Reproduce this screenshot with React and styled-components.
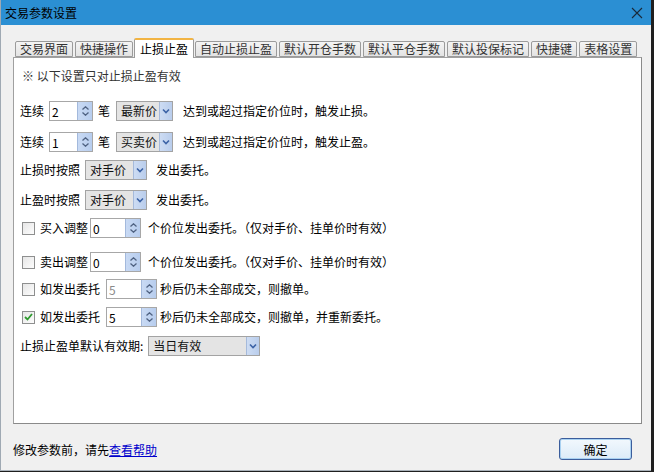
import React, {useState} from "react";
import styled, {createGlobalStyle} from "styled-components";

const GlobalStyle = createGlobalStyle`
  html, body {
    margin: 0;
    padding: 0;
    background: #1f1f1f;
  }
  body {
    font-family: "Noto Sans CJK SC", "Liberation Sans", sans-serif;
    font-size: 12px;
    color: #000;
  }
`

const Screen = styled.div`
  width: 654px;
  height: 472px;
  background: #1f1f1f;
  overflow: hidden;
`

const Window = styled.div`
  width: 650px;
  height: 470px;
  display: flex;
  flex-direction: column;
  background: #f0f0f0;
  border-left: 1px solid #9fa9b3;
  border-bottom: 1px solid #a8b0b8;
`

const TitleBar = styled.div`
  height: 25px;
  flex-shrink: 0;
  display: flex;
  align-items: center;
  justify-content: space-between;
  padding: 0 8px 0 4px;
  background: #2b8fd3;
  line-height: 25px;
`

const TitleText = styled.span`
  font-size: 12px;
  color: #000;
`

const CloseBtn = styled.span`
  display: flex;
  width: 12px;
  height: 12px;
  margin-top: 1px;
`

const Body = styled.div`
  padding: 12px 8px 0 12px;
  flex-shrink: 0;
`

const TabBar = styled.div`
  display: flex;
  align-items: flex-end;
  height: 20px;
  padding-left: 2px;
  position: relative;
  z-index: 1;
`

const Tab = styled.div`
  height: ${p => p.$active ? "20px" : "16px"};
  padding: 0 ${p => p.$active ? "5px" : "4px"};
  margin: ${p => p.$active ? "0 1px -1px -1px" : "0 2px 0 0"};
  box-sizing: border-box;
  display: flex;
  align-items: center;
  justify-content: center;
  line-height: 14px;
  white-space: nowrap;
  color: ${p => p.$active ? "#000" : "#333"};
  border: 1px solid #9b9b9b;
  border-bottom: ${p => p.$active ? "none" : "1px solid #9b9b9b"};
  border-top: ${p => p.$active ? "2px solid #f2b443" : "1px solid #9b9b9b"};
  border-radius: 2px 2px 0 0;
  background: ${p => p.$active ? "#fff" : "linear-gradient(#f4f4f4, #e3e3e3)"};
  cursor: default;
`

const Panel = styled.div`
  width: 629px;
  height: 367px;
  box-sizing: border-box;
  background: #fff;
  border: 1px solid #a0a0a0;
  border-right-color: #8a8a8a;
  border-bottom-color: #8a8a8a;
  padding: 10px 0 0 6px;
  display: flex;
  flex-direction: column;
`

const Notice = styled.div`
  height: 16px;
  line-height: 16px;
  padding-left: 2px;
  color: #333;
`

const Row = styled.div`
  display: flex;
  align-items: center;
  height: 20px;
  margin-top: ${p => p.$mt}px;
  white-space: nowrap;
`

const Text = styled.span`
  margin-left: ${p => p.$ml || 0}px;
  line-height: 20px;
`

const SpinWrap = styled.div`
  display: flex;
  width: ${p => p.$w}px;
  height: 20px;
  margin-left: ${p => p.$ml || 0}px;
  box-sizing: border-box;
  border: 1px solid #a7a7a7;
  background: #fff;
`

const SpinInput = styled.input`
  flex: 1;
  min-width: 0;
  border: none;
  outline: none;
  padding: 0 0 0 2px;
  font: inherit;
  font-size: 12px;
  color: ${p => p.disabled ? "#8a8a8a" : "#000"};
  background: #fff;
`

const SpinBtn = styled.div`
  width: 14px;
  display: flex;
  flex-direction: column;
  align-items: center;
  justify-content: center;
  gap: 2px;
  background: linear-gradient(90deg, #c9daf4, #b7cdee);
  border-left: 1px solid #a3b9dc;
`

const ComboWrap = styled.div`
  display: flex;
  width: ${p => p.$w}px;
  height: 20px;
  margin-left: ${p => p.$ml || 0}px;
  box-sizing: border-box;
  border: 1px solid #a3a3a3;
  background: #e4e4e4;
`

const ComboText = styled.span`
  flex: 1;
  padding-left: 4px;
  line-height: 18px;
  font-size: 12px;
  color: #111;
`

const ComboBtn = styled.div`
  width: 12px;
  display: flex;
  align-items: center;
  justify-content: center;
  background: linear-gradient(90deg, #cddcf3, #b9cdec);
  border-left: 1px solid #a5badb;
`

const Box = styled.span`
  width: 13px;
  height: 13px;
  margin-left: 2px;
  box-sizing: border-box;
  border: 1px solid #8e8f8f;
  background: linear-gradient(135deg, #e6e6e6, #fdfdfd);
  display: flex;
  align-items: center;
  justify-content: center;
`

const Footer = styled.div`
  flex: 1;
  display: flex;
  align-items: center;
  justify-content: space-between;
  padding: 4px 19px 0 12px;
`

const Link = styled.a`
  color: #0000cc;
  text-decoration: underline;
  cursor: pointer;
`

const OkButton = styled.button`
  width: 73px;
  height: 22px;
  box-sizing: border-box;
  border: 1px solid #3b5d9c;
  border-radius: 3px;
  background: linear-gradient(#f2f8fd, #dcebf8);
  box-shadow: inset 0 0 0 1px #a9d1f1;
  font: inherit;
  font-size: 12px;
  color: #000;
  padding: 0;
`

const Spin = ({w, ml, value, disabled}) => (
    <SpinWrap $w={w} $ml={ml}>
        <SpinInput defaultValue={value} disabled={disabled}/>
        <SpinBtn>
            <svg width="7" height="4" viewBox="0 0 7 4">
                <polyline points="0.5,3.5 3.5,0.8 6.5,3.5" fill="none" stroke="#4f6282" strokeWidth="1.3"/>
            </svg>
            <svg width="7" height="4" viewBox="0 0 7 4">
                <polyline points="0.5,0.5 3.5,3.2 6.5,0.5" fill="none" stroke="#4f6282" strokeWidth="1.3"/>
            </svg>
        </SpinBtn>
    </SpinWrap>
)

const Combo = ({w, ml, value}) => (
    <ComboWrap $w={w} $ml={ml}>
        <ComboText>{value}</ComboText>
        <ComboBtn>
            <svg width="8" height="6" viewBox="0 0 8 6">
                <polyline points="1,1.5 4,4.5 7,1.5" fill="none" stroke="#3c63a6" strokeWidth="1.6"/>
            </svg>
        </ComboBtn>
    </ComboWrap>
)

const Check = ({checked}) => (
    <Box>
        {checked && (
            <svg width="9" height="8" viewBox="0 0 9 8">
                <polyline points="1,4 3.5,6.5 8,1" fill="none" stroke="#2f9a2f" strokeWidth="1.8"/>
            </svg>
        )}
    </Box>
)

const tabs = ["交易界面", "快捷操作", "止损止盈", "自动止损止盈", "默认开仓手数", "默认平仓手数", "默认投保标记", "快捷键", "表格设置"]

const App = () => {
    const [active, setActive] = useState(2)
    return (
        <Screen>
            <GlobalStyle/>
            <Window>
                <TitleBar>
                    <TitleText>交易参数设置</TitleText>
                    <CloseBtn>
                        <svg width="12" height="12" viewBox="0 0 12 12">
                            <path d="M1 1 L11 11 M11 1 L1 11" stroke="#1a2a3a" strokeWidth="1.1"/>
                        </svg>
                    </CloseBtn>
                </TitleBar>
                <Body>
                    <TabBar>
                        {tabs.map((t, i) => (
                            <Tab key={t} $active={i === active} onClick={() => setActive(i)}>{t}</Tab>
                        ))}
                    </TabBar>
                    <Panel>
                        <Notice>※ 以下设置只对止损止盈有效</Notice>
                        <Row $mt={17}>
                            <Text>连续</Text>
                            <Spin w={44} ml={5} value="2"/>
                            <Text $ml={5}>笔</Text>
                            <Combo w={57} ml={6} value="最新价"/>
                            <Text $ml={10}>达到或超过指定价位时，触发止损。</Text>
                        </Row>
                        <Row $mt={11}>
                            <Text>连续</Text>
                            <Spin w={44} ml={5} value="1"/>
                            <Text $ml={5}>笔</Text>
                            <Combo w={57} ml={6} value="买卖价"/>
                            <Text $ml={10}>达到或超过指定价位时，触发止盈。</Text>
                        </Row>
                        <Row $mt={8}>
                            <Text>止损时按照</Text>
                            <Combo w={62} ml={5} value="对手价"/>
                            <Text $ml={9}>发出委托。</Text>
                        </Row>
                        <Row $mt={10}>
                            <Text>止盈时按照</Text>
                            <Combo w={62} ml={5} value="对手价"/>
                            <Text $ml={9}>发出委托。</Text>
                        </Row>
                        <Row $mt={8}>
                            <Check/>
                            <Text $ml={5}>买入调整</Text>
                            <Spin w={51} ml={2} value="0"/>
                            <Text $ml={7}>个价位发出委托。（仅对手价、挂单价时有效）</Text>
                        </Row>
                        <Row $mt={14}>
                            <Check/>
                            <Text $ml={5}>卖出调整</Text>
                            <Spin w={51} ml={2} value="0"/>
                            <Text $ml={7}>个价位发出委托。（仅对手价、挂单价时有效）</Text>
                        </Row>
                        <Row $mt={7}>
                            <Check/>
                            <Text $ml={5}>如发出委托</Text>
                            <Spin w={51} ml={6} value="5" disabled/>
                            <Text $ml={3}>秒后仍未全部成交，则撤单。</Text>
                        </Row>
                        <Row $mt={8}>
                            <Check checked/>
                            <Text $ml={5}>如发出委托</Text>
                            <Spin w={51} ml={6} value="5"/>
                            <Text $ml={3}>秒后仍未全部成交，则撤单，并重新委托。</Text>
                        </Row>
                        <Row $mt={9}>
                            <Text>止损止盈单默认有效期:</Text>
                            <Combo w={112} ml={5} value="当日有效"/>
                        </Row>
                    </Panel>
                </Body>
                <Footer>
                    <span>修改参数前，请先<Link>查看帮助</Link></span>
                    <OkButton>确定</OkButton>
                </Footer>
            </Window>
        </Screen>
    )
}

export default App
